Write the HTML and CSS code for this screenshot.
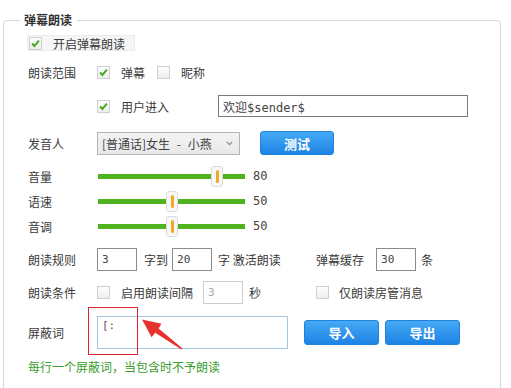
FILE: index.html
```html
<!DOCTYPE html>
<html lang="zh-CN">
  <head>
    <meta charset="UTF-8" />
    <meta name="viewport" content="width=device-width, initial-scale=1.0" />
    <title>弹幕朗读</title>
    <link rel="stylesheet" href="styles.css">
  </head>

  <body>
    <fieldset class="panel">
      <legend>弹幕朗读</legend>

      <div class="row row-enable">
        <label class="enable-box">
          <span class="cb"><svg viewBox="0 0 13 13"><path d="M2.5 6.5 L5.2 9.5 L10.5 3" /></svg></span>
          <span class="cb-text">开启弹幕朗读</span>
        </label>
      </div>

      <div class="row row-scope">
        <span class="label">朗读范围</span>
        <span class="cb"><svg viewBox="0 0 13 13"><path d="M2.5 6.5 L5.2 9.5 L10.5 3" /></svg></span>
        <span class="cb-text">弹幕</span>
        <span class="cb cb-next"></span>
        <span class="cb-text">昵称</span>
      </div>

      <div class="row row-enter">
        <span class="cb"><svg viewBox="0 0 13 13"><path d="M2.5 6.5 L5.2 9.5 L10.5 3" /></svg></span>
        <span class="cb-text">用户进入</span>
        <input class="text-input welcome" type="text" value="欢迎$sender$">
      </div>

      <div class="row row-voice">
        <span class="label">发音人</span>
        <div class="select">
          <span class="select-text">[普通话]女生 - 小燕</span>
          <svg class="chevron" viewBox="0 0 7 5"><path d="M0.8 0.8 L3.5 3.6 L6.2 0.8" /></svg>
        </div>
        <button class="btn btn-test">测试</button>
      </div>

      <div class="row row-slider first">
        <span class="label">音量</span>
        <div class="track">
          <span class="thumb" style="left: 119px"><i></i></span>
        </div>
        <span class="value">80</span>
      </div>
      <div class="row row-slider">
        <span class="label">语速</span>
        <div class="track">
          <span class="thumb" style="left: 74px"><i></i></span>
        </div>
        <span class="value">50</span>
      </div>
      <div class="row row-slider">
        <span class="label">音调</span>
        <div class="track">
          <span class="thumb" style="left: 74px"><i></i></span>
        </div>
        <span class="value">50</span>
      </div>

      <div class="row row-rule">
        <div class="group">
          <span class="label">朗读规则</span>
          <input class="num" type="text" value="3">
          <span class="gap-a">字到</span>
          <input class="num" type="text" value="20">
          <span class="gap-b">字 激活朗读</span>
        </div>
        <span>弹幕缓存</span>
        <input class="num num-cache" type="text" value="30">
        <span class="gap-c">条</span>
      </div>

      <div class="row row-cond">
        <div class="group">
          <span class="label">朗读条件</span>
          <span class="cb"></span>
          <span class="cb-text">启用朗读间隔</span>
          <input class="num num-off" type="text" value="3" disabled>
          <span class="gap-b">秒</span>
        </div>
        <span class="cb"></span>
        <span class="cb-text cb-text-b">仅朗读房管消息</span>
      </div>

      <div class="row row-block">
        <span class="label">屏蔽词</span>
        <textarea class="words">[:</textarea>
        <button class="btn btn-io">导入</button>
        <button class="btn btn-io btn-out">导出</button>

        <span class="mark-box"></span>
        <svg class="mark-arrow" viewBox="138 316 48 36">
          <polygon points="142,319.5 151.6,337.3 155.2,332.8 181.4,349.6 182.6,348.4 158.6,328.4 161.4,323.8" />
        </svg>
      </div>

      <p class="hint">每行一个屏蔽词，当包含时不予朗读</p>
    </fieldset>
  </body>
</html>
```

FILE: styles.css
```css
body {
  margin: 0;
  padding: 0;
  background-color: #fff;
  font-family: "Noto Sans CJK SC", "Noto Sans", sans-serif;
  font-size: 12px;
  color: #3a3a3a;
}

.panel {
  box-sizing: border-box;
  width: 498px;
  margin: 10px 0 0 3px;
  padding: 0 0 20px 24px;
  border: 1px solid #d6d6d6;
  border-radius: 4px;
}

.panel legend {
  margin-left: -8px;
  padding: 0 5px 0 4px;
  line-height: 20px;
  font-size: 12px;
  font-weight: bold;
  color: #333;
}

.row {
  display: flex;
  align-items: center;
  white-space: nowrap;
}

.label {
  width: 69px;
  flex: none;
}

/* checkbox */
.cb {
  box-sizing: border-box;
  width: 13px;
  height: 13px;
  flex: none;
  border: 1px solid #cfcfcf;
  background: linear-gradient(#fdfdfd, #eeeeee);
}

.cb svg {
  display: block;
  width: 11px;
  height: 11px;
}

.cb path {
  fill: none;
  stroke: #45a822;
  stroke-width: 2.4;
}

.cb-text {
  margin-left: 11px;
}

.cb-next {
  margin-left: 12px;
}

.row-enable {
  height: 22px;
  margin-top: 2px;
}

.enable-box {
  display: flex;
  align-items: center;
  height: 14px;
  margin-left: -1px;
  padding: 0 9px 0 1px;
  background-color: #f6f6f6;
  border: 1px solid #ececec;
}

.enable-box .cb-text {
  margin-left: 11px;
}

.row-scope {
  height: 22px;
  margin-top: 7px;
}

.row-enter {
  height: 22px;
  margin-top: 12px;
  padding-left: 69px;
}

.text-input,
.num,
.words {
  box-sizing: border-box;
  margin: 0;
  font-family: "DejaVu Sans Mono", "Noto Sans CJK SC", monospace;
  font-size: 11px;
  color: #444;
  background: #fff;
  outline: none;
}

.welcome {
  width: 250px;
  height: 22px;
  margin-left: 49px;
  padding: 0 4px;
  border: 1px solid #7a7a7a;
  font-size: 12px;
}

.row-voice {
  height: 24px;
  margin-top: 14px;
}

.select {
  box-sizing: border-box;
  display: flex;
  align-items: center;
  justify-content: space-between;
  width: 143px;
  height: 23px;
  padding: 0 6px 0 4px;
  border: 1px solid #b4b4b4;
  background: linear-gradient(#f4f4f4, #e8e8e8);
  color: #444;
}

.select-text {
  word-spacing: 4px;
}

.chevron {
  width: 7px;
  height: 5px;
}

.chevron path {
  fill: none;
  stroke: #888;
  stroke-width: 1.2;
}

.btn {
  box-sizing: border-box;
  border: 1px solid #1f82db;
  border-radius: 3px;
  background: linear-gradient(#46a9f5, #1d83e4);
  color: #fff;
  font-family: "Noto Sans CJK SC", sans-serif;
  font-size: 13px;
  font-weight: bold;
  padding: 0;
  cursor: pointer;
}

.btn-test {
  width: 74px;
  height: 24px;
  margin-left: 20px;
}

/* sliders */
.row-slider {
  height: 20px;
  margin-top: 5px;
}

.row-slider.first {
  margin-top: 11px;
}

.row-slider .label {
  width: 70px;
}

.track {
  position: relative;
  width: 147px;
  height: 5px;
  background-color: #4fb31f;
}

.thumb {
  position: absolute;
  top: -8px;
  box-sizing: border-box;
  width: 12px;
  height: 21px;
  margin-left: -6px;
  border: 1px solid #dcdcdc;
  border-radius: 3px;
  background: #f7f7f7;
  display: flex;
  align-items: center;
  justify-content: center;
}

.thumb i {
  display: block;
  width: 3px;
  height: 13px;
  border-radius: 2px;
  background-color: #f5a623;
}

.value {
  margin-left: 8px;
  font-family: "DejaVu Sans Mono", monospace;
  font-size: 12px;
  color: #444;
}

/* rules */
.row-rule {
  height: 23px;
  margin-top: 12px;
}

.row-cond {
  height: 23px;
  margin-top: 10px;
}

.group {
  display: flex;
  align-items: center;
  width: 288px;
  flex: none;
}

.num {
  width: 40px;
  height: 23px;
  padding: 0 4px;
  border: 1px solid #8c8c8c;
}

.gap-a {
  margin: 0 4px 0 7px;
}

.gap-b {
  margin-left: 6px;
}

.gap-c {
  margin-left: 5px;
}

.num-cache {
  margin-left: 12px;
}

.num-off {
  margin-left: 10px;
  border-color: #cdcdcd;
  color: #aaa;
}

.cb-text-b {
  margin-left: 10px;
}

/* block words */
.row-block {
  position: relative;
  height: 33px;
  margin-top: 12px;
}

.words {
  width: 191px;
  height: 33px;
  padding: 2px 4px;
  border: 1px solid #a3c6e2;
  resize: none;
  color: #555;
  line-height: 14px;
}

.btn-io {
  width: 75px;
  height: 25px;
  margin-left: 16px;
}

.btn-out {
  margin-left: 6px;
}

.mark-box {
  position: absolute;
  left: 60px;
  top: -9px;
  width: 50px;
  height: 48px;
  border: 1px solid #d8262c;
  box-sizing: border-box;
}

.mark-arrow {
  position: absolute;
  left: 110px;
  top: 0;
  width: 48px;
  height: 36px;
}

.mark-arrow polygon {
  fill: #e8322f;
}

.hint {
  margin: 10px 0 0;
  line-height: 16px;
  color: #3a9d2c;
}
```
